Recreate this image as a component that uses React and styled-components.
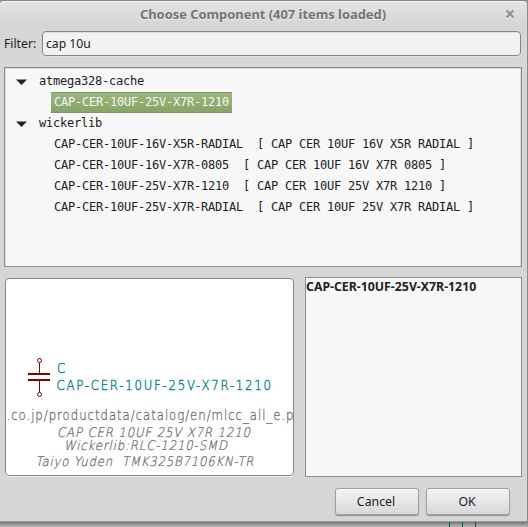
import React from 'react';
import styled, { createGlobalStyle, css } from 'styled-components';

const Global = createGlobalStyle`
  * { box-sizing: border-box; }
  html, body { margin: 0; padding: 0; overflow: hidden; background: #a5a5a5; }
  body { font-family: "Noto Sans", sans-serif; font-size: 12.2px; color: #212121; }
`;

const Desktop = styled.div`
  width: 528px;
  height: 527px;
  display: grid;
  grid-template-rows: 522px 5px;
  background: linear-gradient(#929292 0, #929292 521px, #777 522px, #b9b9b9 527px);
`;

const Dialog = styled.main`
  display: flex;
  flex-direction: column;
  width: 528px;
  height: 522px;
  border-top: 1px solid #858585;
  border-right: 1px solid #8b8b8b;
  border-bottom: 1px solid #999;
  border-radius: 4px 5px 0 0;
  background: #d6d6d6;
`;

const TitleBar = styled.header`
  display: grid;
  grid-template-columns: 1fr 37px;
  align-items: center;
  height: 29px;
  flex: none;
  border-top: 1px solid #f7f7f7;
  border-radius: 4px 4px 0 0;
  background: linear-gradient(#e3e3e3, #d5d5d5 24px, #d6d6d6);
`;

const Title = styled.h1`
  margin: -4px 0 0;
  padding-left: 36px;
  font-size: 12.9px;
  line-height: 18px;
  font-weight: 700;
  text-align: center;
  white-space: nowrap;
  color: #747474;
  text-shadow: 0 1px #eeeeee;
`;

const CloseButton = styled.button`
  display: grid;
  place-items: center;
  width: 20px;
  height: 20px;
  margin: -5px 0 0 10px;
  padding: 0;
  border: 0;
  background: none;
`;

const FilterRow = styled.label`
  display: grid;
  grid-template-columns: 38px 1fr;
  align-items: center;
  height: 26px;
  flex: none;
  margin: 1px 6px 10px 4px;
`;

const FilterLabel = styled.span`
  margin-top: -2px;
`;

const FilterInput = styled.input`
  width: 100%;
  height: 25px;
  margin-top: -1px;
  padding: 0 3px;
  border: 1px solid #858585;
  border-radius: 4px;
  outline: 0;
  background: #f2f2f2;
  box-shadow: inset 0 1px #dedede, 0 1px #e2e2e2;
  font: inherit;
  color: #212121;
`;

const Tree = styled.ul`
  height: 200px;
  flex: none;
  margin: 0 5px 0 4px;
  padding: 3px 0 0;
  list-style: none;
  border: 1px solid #8c8c8c;
  background: #f7f7f7;
  box-shadow: inset 1px 1px #d9d9d9, inset -1px 0 #d9d9d9;
  font: 12px/21px "DejaVu Sans Mono", monospace;
  letter-spacing: -0.224px;
`;

const TreeRow = styled.li`
  display: flex;
  align-items: center;
  height: 21px;
  padding-left: ${p => (p.$leaf ? '46px' : '11px')};
  white-space: pre;
`;

const Arrow = styled.svg`
  width: 11px;
  height: 6px;
  margin-right: 12px;
`;

const RowLabel = styled.span`
  height: 21px;
  padding: 0 3px;
  ${p => !p.$leaf && css`padding: 0;`}
  ${p => p.$selected && css`
    border-top: 1px solid #83936f;
    border-bottom: 1px solid #858c7c;
    line-height: 19px;
    background: linear-gradient(#9ab67c, #87a568);
    color: #f5f5f5;
  `}
`;

const Panels = styled.section`
  display: grid;
  grid-template-columns: 289px 217px;
  column-gap: 11px;
  height: 200px;
  flex: none;
  margin: 10px 5px 0 5px;
`;

const Preview = styled.div`
  height: 198px;
  margin-top: 1px;
  overflow: hidden;
  border: 1px solid #858585;
  border-radius: 4px;
  background: #fff;
  box-shadow: 0 1px #f0f0f0;

  svg { display: block; }
`;

const StrokeText = styled.text`
  font-family: "DejaVu Sans", sans-serif;
  font-weight: 200;
  font-size: 13.2px;
  fill: ${p => p.$color || '#666'};
  stroke: ${p => p.$color || '#666'};
  stroke-width: ${p => (p.$color ? 0.4 : 0.25)}px;
  white-space: pre;
`;

const Description = styled.div`
  width: 217px;
  border: 1px solid #8c8c8c;
  background: #f7f7f7;
  font-size: 12.3px;
  line-height: 17px;
  font-weight: 700;
`;

const Actions = styled.footer`
  display: flex;
  justify-content: flex-end;
  gap: 7px;
  margin: 11px 17px 0 0;
`;

const Button = styled.button`
  width: 84px;
  height: 27px;
  padding: 0 2px 1px 0;
  border: 1px solid #a0a0a0;
  border-radius: 3px;
  background: linear-gradient(#f3f3f3, #d8d8d8);
  box-shadow: inset 0 1px #fafafa, 0 1px 1px #8b8b8b;
  font: inherit;
  font-size: 12.3px;
  color: #212121;
`;

const Shadow = styled.div`
  display: flex;
  gap: 12px;
  padding-left: 449px;
`;

const Wire = styled.i`
  width: 1px;
  height: 5px;
  background: #085c10;
`;

const rows = [
  { text: 'atmega328-cache' },
  { text: 'CAP-CER-10UF-25V-X7R-1210', leaf: true, selected: true },
  { text: 'wickerlib' },
  { text: 'CAP-CER-10UF-16V-X5R-RADIAL  [ CAP CER 10UF 16V X5R RADIAL ]', leaf: true },
  { text: 'CAP-CER-10UF-16V-X7R-0805  [ CAP CER 10UF 16V X7R 0805 ]', leaf: true },
  { text: 'CAP-CER-10UF-25V-X7R-1210  [ CAP CER 10UF 25V X7R 1210 ]', leaf: true },
  { text: 'CAP-CER-10UF-25V-X7R-RADIAL  [ CAP CER 10UF 25V X7R RADIAL ]', leaf: true },
];

const labels = [
  { text: 'C', x: 57, y: 373, width: 8, color: '#008484' },
  { text: 'CAP-CER-10UF-25V-X7R-1210', x: 56.5, y: 390, width: 214.5, color: '#008484' },
  { text: '.co.jp/productdata/catalog/en/mlcc_all_e.p', x: 6.5, y: 420, width: 287 },
  { text: 'CAP CER 10UF 25V X7R 1210', x: 57, y: 437, width: 193, slant: true },
  { text: 'Wickerlib:RLC-1210-SMD', x: 64, y: 450, width: 163, slant: true },
  { text: 'Taiyo Yuden  TMK325B7106KN-TR', x: 35.5, y: 466, width: 218, slant: true },
];

const GLYPH_SCALE = 0.89;

function ComponentPreview() {
  return (
    <Preview>
      <svg width="287" height="196" viewBox="6 279 287 196">
        <g fill="none" stroke="#840000">
          <circle cx="39.5" cy="360.5" r="2" />
          <path d="M39.5 363v11M39.5 380v12" />
          <circle cx="39.5" cy="394.5" r="2" />
          <path d="M28 374h22M28 380h22" strokeWidth="2" />
        </g>
        {labels.map(l => (
          <StrokeText
            key={l.text}
            $color={l.color}
            textLength={l.width / GLYPH_SCALE}
            lengthAdjust="spacing"
            transform={`translate(${l.x} ${l.y})${l.slant ? ' skewX(-12)' : ''} scale(${GLYPH_SCALE} 1)`}
          >
            {l.text}
          </StrokeText>
        ))}
      </svg>
    </Preview>
  );
}

export default function App() {
  return (
    <>
      <Global />
      <Desktop>
        <Dialog>
          <TitleBar>
            <Title>Choose Component (407 items loaded)</Title>
            <CloseButton aria-label="Close">
              <svg width="10" height="10" viewBox="0 0 10 10">
                <path d="M1.7 2.7l6.6 6.6M8.3 2.7L1.7 9.3" stroke="#f4f4f4" strokeWidth="2.2" />
                <path d="M1.5 1.5l7 7M8.5 1.5l-7 7" stroke="#929292" strokeWidth="2.3" />
              </svg>
            </CloseButton>
          </TitleBar>
          <FilterRow>
            <FilterLabel>Filter:</FilterLabel>
            <FilterInput defaultValue="cap 10u" />
          </FilterRow>
          <Tree>
            {rows.map(r => (
              <TreeRow key={r.text} $leaf={r.leaf}>
                {!r.leaf && (
                  <Arrow viewBox="0 0 11 6"><path d="M0 .5h11L5.5 6z" fill="#212121" /></Arrow>
                )}
                <RowLabel $leaf={r.leaf} $selected={r.selected}>{r.text}</RowLabel>
              </TreeRow>
            ))}
          </Tree>
          <Panels>
            <ComponentPreview />
            <Description>CAP-CER-10UF-25V-X7R-1210</Description>
          </Panels>
          <Actions>
            <Button>Cancel</Button>
            <Button>OK</Button>
          </Actions>
        </Dialog>
        <Shadow><Wire /><Wire /><Wire /></Shadow>
      </Desktop>
    </>
  );
}
